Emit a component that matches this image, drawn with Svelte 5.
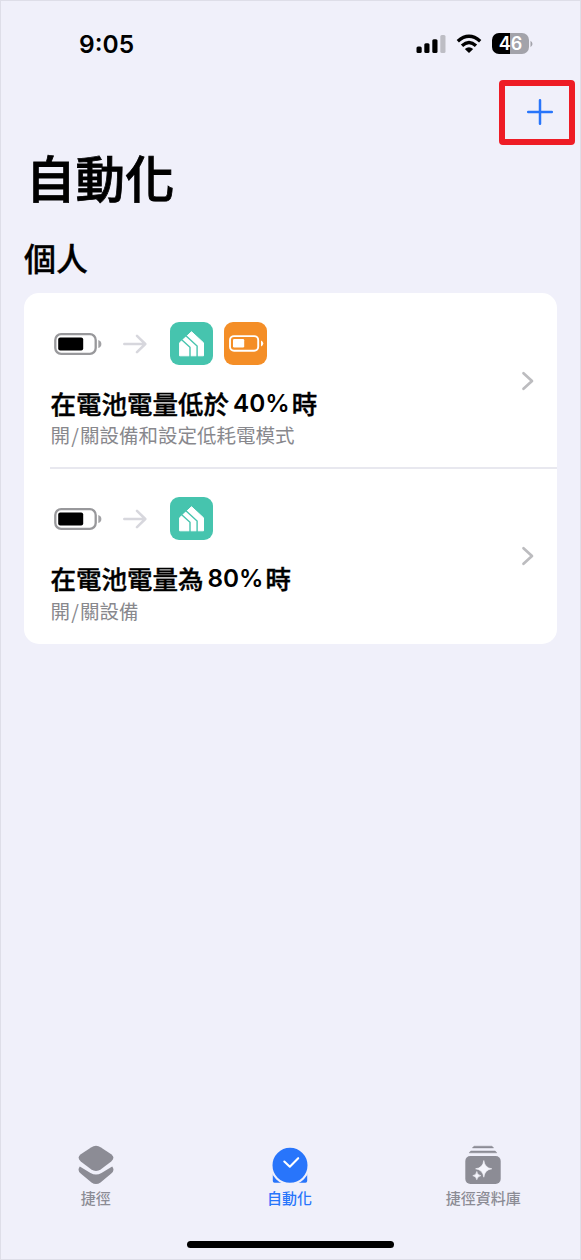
<script>
  const rows = [
    { before: '在電池電量低於', value: '40%', after: '時', detail: '關設備和設定低耗電模式', lowPower: true },
    { before: '在電池電量為', value: '80%', after: '時', detail: '關設備', lowPower: false }
  ];
</script>

<div class="screen">
  <header class="status">
    <span class="time">9:05</span>
    <div class="indicators">
      <svg class="signal" width="30" height="20" viewBox="0 0 30 20">
        <rect x="0.5" y="12.5" width="5.2" height="6.5" rx="1.5" />
        <rect x="8.3" y="9.2" width="5.2" height="9.8" rx="1.5" />
        <rect x="16.3" y="5.2" width="5.2" height="13.8" rx="1.5" />
        <rect x="24.3" y="1" width="5.2" height="18" rx="1.5" fill="#bdbdc4" />
      </svg>
      <svg class="wifi" width="26" height="20" viewBox="0 0 26 20">
        <g fill="none" stroke="#000" stroke-width="3.4">
          <path d="M1.8 7.2Q13-2.7 24.2 7.2" />
          <path d="M6 11.7Q13 5.5 20 11.7" />
        </g>
        <path d="M13 19L8.8 14.9Q13 11.5 17.2 14.9Z" />
      </svg>
      <div class="battery"><span>46</span></div>
      <svg width="3" height="8" viewBox="0 0 3 8"><path d="M.5.8Q4.5 4 .5 7.2Z" fill="#a3a3aa" /></svg>
    </div>
  </header>

  <nav class="toolbar">
    <button class="add" aria-label="+">
      <svg width="28" height="28" viewBox="0 0 28 28"><path d="M14 2.2V25.8M2.2 14H25.8" stroke="#2875fb" stroke-width="2.5" stroke-linecap="round" /></svg>
    </button>
  </nav>

  <h1>自動化</h1>
  <h2>個人</h2>

  <main class="card">
    {#each rows as row}
      <section class="row">
        <div class="content">
          <div class="icons">
            <svg class="level" width="48" height="24" viewBox="0 0 48 24">
              <rect x="1.3" y="2.2" width="40.4" height="19.6" rx="5.8" fill="#fff" stroke="#98989b" stroke-width="2.3" />
              <rect x="4.2" y="5.4" width="25" height="13" rx="2" />
              <path d="M44.3 8Q47.4 9 47.4 12T44.3 16Z" fill="#a2a2a5" />
            </svg>
            <svg class="arrow" width="24" height="20" viewBox="0 0 24 20"><path d="M1.3 10H22M14 1.8L22.3 10L14 18.2" fill="none" stroke="#d7d7dd" stroke-width="2.5" stroke-linecap="round" stroke-linejoin="round" /></svg>
            <svg class="tile" width="43" height="43" viewBox="0 0 43 43">
              <rect width="43" height="43" rx="9" fill="#46c4ae" />
              <path d="M9.6 20.8L21.5 9.7L33.5 20.8V33.8H9.6Z" fill="#fff" stroke="#fff" stroke-width="1" stroke-linejoin="round" />
              <path d="M11.7 17.7L20 25.3V35M15.9 13.8L27.1 24.1V35" fill="none" stroke="#46c4ae" stroke-width="1.4" />
            </svg>
            {#if row.lowPower}
              <svg class="tile" width="43" height="43" viewBox="0 0 43 43">
                <rect width="43" height="43" rx="9" fill="#f48e27" />
                <rect x="6" y="14.1" width="28.2" height="14.6" rx="4" fill="none" stroke="#fff" stroke-width="1.9" />
                <rect x="9" y="17" width="11.2" height="8.5" rx="1.2" fill="#fff" />
                <path d="M37 18.4Q39.3 19.2 39.3 21.4T37 24.4Z" fill="#fff" />
              </svg>
            {/if}
          </div>
          <h3><span>{row.before}</span><span class="value">{row.value}</span><span>{row.after}</span></h3>
          <p><span>開</span><span class="slash">/</span><span>{row.detail}</span></p>
        </div>
        <svg class="chevron" width="14" height="20" viewBox="0 0 14 20"><path d="M2.5 2.2L11 10L2.5 17.8" fill="none" stroke="#bcbcbf" stroke-width="2.7" stroke-linecap="round" stroke-linejoin="round" /></svg>
      </section>
    {/each}
  </main>

  <footer>
    <div class="tabs">
      <div class="tab">
        <svg width="38" height="42" viewBox="0 0 38 42" fill="#8c8c95">
          <path d="M2.8 21.6Q-.3 25.6 4 28.8L14.5 37.4Q19 40.8 23.5 37.4L34 28.8Q38.3 25.6 35.2 21.6L24.5 28Q19 31.2 13.5 28Z" />
          <path d="M14 2.4Q19-.9 24 2.4L34.2 9.2Q38.6 12.8 34.2 16.6L24 24.2Q19 27.6 14 24.2L3.8 16.6Q-.6 12.8 3.8 9.2Z" />
        </svg>
        <span>捷徑</span>
      </div>
      <div class="tab active">
        <svg width="38" height="42" viewBox="0 0 38 42">
          <path d="M1.8 28H36.2V36Q36.2 37.8 34.4 37.8H3.6Q1.8 37.8 1.8 36Z" fill="#2875fb" />
          <circle cx="19" cy="20.3" r="18.6" fill="#2875fb" stroke="#f0f0fa" stroke-width="2.2" />
          <path d="M13.3 16.5L18.8 21.7L27.2 13.2" fill="none" stroke="#fff" stroke-width="2.1" stroke-linecap="round" stroke-linejoin="round" />
        </svg>
        <span>自動化</span>
      </div>
      <div class="tab">
        <svg width="38" height="42" viewBox="0 0 38 42" fill="#8c8c95">
          <path d="M10 1.2H28L29.6 2.9H8.4ZM6.8 6H31.2L32.8 7.8H5.2Z" stroke="#8c8c95" stroke-width=".5" stroke-linejoin="round" />
          <rect x="1.3" y="11" width="35.4" height="28" rx="5" />
          <path d="M19.8 15.5Q20.8 23 27.8 23.8Q20.8 24.8 19.8 32.2Q18.8 24.8 11.6 23.8Q18.8 23 19.8 15.5ZM12.8 26.5Q13.3 30.2 16.8 30.7Q13.3 31.2 12.8 34.7Q12.3 31.2 8.8 30.7Q12.3 30.2 12.8 26.5Z" fill="#f5f5fc" stroke="#f5f5fc" stroke-width=".6" />
        </svg>
        <span>捷徑資料庫</span>
      </div>
    </div>
    <div class="home"></div>
  </footer>
</div>

<style>
  :global(body) { margin: 0; }
  .screen {
    box-sizing: border-box;
    width: 581px;
    height: 1260px;
    display: flex;
    flex-direction: column;
    background: #f0f0fa;
    border: 1px solid #dedee8;
    color: #000;
    font-family: Inter, "Noto Sans CJK TC", sans-serif;
    overflow: hidden;
  }
  h1, h2, h3, p { margin: 0; white-space: nowrap; font-family: "Noto Sans CJK TC", sans-serif; }
  svg { display: block; flex: none; }
  .status {
    height: 79px;
    display: flex;
    flex: none;
    justify-content: space-between;
    padding: 0 47px 0 78px;
    box-sizing: border-box;
  }
  .time { font-size: 24.5px; font-weight: 600; line-height: 30px; margin-top: 28px; }
  .indicators { display: flex; align-items: center; height: 21px; margin-top: 32px; }
  .signal { margin-right: 10px; }
  .wifi { margin-right: 10px; }
  .battery {
    width: 37px;
    height: 21px;
    border-radius: 7px;
    background: linear-gradient(90deg, #000 18px, #a3a3aa 18px);
    color: #fff;
    font-size: 18px;
    font-weight: 600;
    line-height: 21px;
    text-align: center;
    margin-right: 1px;
  }
  .toolbar { display: flex; flex: none; justify-content: flex-end; padding-right: 5px; }
  .add {
    width: 76px;
    height: 65px;
    padding: 0 0 2px 6px;
    box-sizing: border-box;
    border: 6px solid #ee1c25;
    border-radius: 4px;
    background: none;
    display: flex;
    align-items: center;
    justify-content: center;
  }
  h1 { font-size: 49.5px; line-height: 60px; font-weight: 500; padding-left: 25px; margin-top: 2px; -webkit-text-stroke: .8px #000; }
  h2 { font-size: 32px; line-height: 40px; font-weight: 500; padding-left: 23px; margin-top: 30px; -webkit-text-stroke: .3px #000; }
  .card { width: 533px; margin: 16px 0 0 23px; border-radius: 15px; background: #fff; flex: none; }
  .row { height: 175px; box-sizing: border-box; display: flex; padding-left: 26px; }
  .content { flex: 1; padding-top: 29px; }
  .row + .row { position: relative; height: 176px; }
  .row + .row::before { content: ""; position: absolute; top: -1px; left: 26px; right: 0; height: 2px; background: #e8e8ef; }
  .icons { display: flex; align-items: center; height: 43px; padding-left: 4px; }
  .arrow { margin: 0 23px 0 21px; }
  .tile + .tile { margin-left: 11px; }
  h3 { display: flex; font-size: 25.5px; line-height: 32px; font-weight: 500; margin-top: 22px; padding-left: .5px; -webkit-text-stroke: .4px #000; }
  .value { font-family: Inter, sans-serif; font-weight: 600; font-size: 24.3px; margin: 0 2px 0 4px; -webkit-text-stroke: 0; }
  p { display: flex; font-size: 19.5px; line-height: 26px; color: #88888d; margin-top: 3px; padding-left: .5px; }
  .row + .row p { margin-top: 4px; }
  .slash { width: 10px; text-align: center; }
  .chevron { margin: 78px 22px 0 0; }
  footer { margin-top: auto; }
  .tabs { display: flex; margin: 0 0 0 -2px; }
  .tab { flex: 1; display: flex; flex-direction: column; align-items: center; color: #8c8c95; }
  .tab span { font-family: "Noto Sans CJK TC", sans-serif; font-size: 15px; font-weight: 500; line-height: 20px; margin-top: 1px; }
  .active span { color: #2875fb; }
  .home { width: 207px; height: 7px; margin: 33px auto 11px; border-radius: 4px; background: #000; }
</style>
